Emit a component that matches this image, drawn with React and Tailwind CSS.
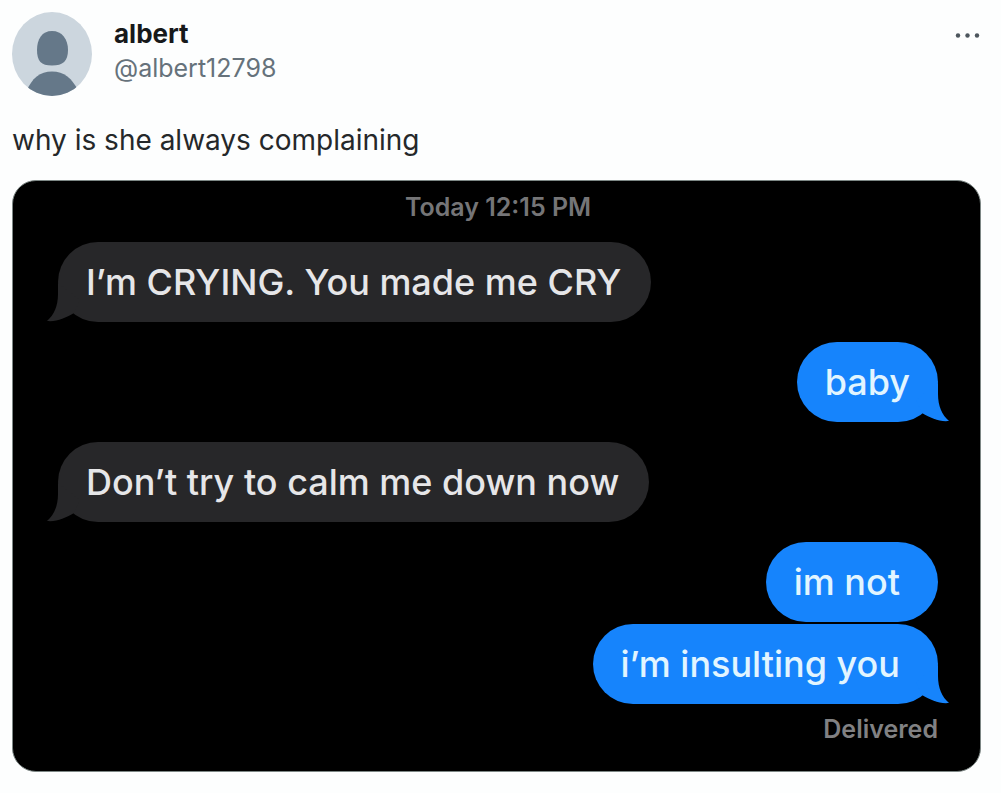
const messages = [
  { id: 1, from: "them", text: "I’m CRYING. You made me CRY", tail: true, spacing: "mt-5 pr-[30px]" },
  { id: 2, from: "me", text: "baby", tail: true, spacing: "mt-5 pr-7" },
  { id: 3, from: "them", text: "Don’t try to calm me down now", tail: true, spacing: "mt-5 pr-[30px]" },
  { id: 4, from: "me", text: "im not", tail: false, spacing: "mt-5 pr-[38px]" },
  { id: 5, from: "me", text: "i’m insulting you", tail: true, spacing: "mt-0.5 pr-[38px]" },
];

function Avatar() {
  return (
    <svg viewBox="0 0 80 84" className="h-[84px] w-20 shrink-0" role="img" aria-label="albert">
      <defs>
        <clipPath id="avatar-clip">
          <ellipse cx="40" cy="42" rx="40" ry="42" />
        </clipPath>
      </defs>
      <g clipPath="url(#avatar-clip)">
        <rect width="80" height="84" fill="#ccd6de" />
        <path d="M40 19C50 19 56 27 56 38C56 49 51 53.500 40 53.500S25 49 25 38C25 27 30 19 40 19Z" fill="#657889" />
        <path d="M14 80C20 66 28 59.500 40 59.500S60 66 67 80L60 84H20Z" fill="#657889" />
      </g>
    </svg>
  );
}

function Tail({ mine }) {
  return (
    <svg
      viewBox="0 0 40 42"
      aria-hidden="true"
      className={
        mine
          ? "absolute -right-3 bottom-0 h-[42px] w-10 -scale-x-100 fill-[#1684fc]"
          : "absolute bottom-0 -left-3 h-[42px] w-10 fill-[#272729]"
      }
    >
      <path d="M12 3V14C12 26 8 35 1 41C11 42 19 38 28 33L34 20Z" />
    </svg>
  );
}

function Message({ message }) {
  const mine = message.from === "me";
  return (
    <li className={`flex ${mine ? "justify-end" : "justify-start"}`}>
      <div
        className={`relative rounded-[40px] py-4 pl-7 text-4xl leading-12 font-medium ${message.spacing} ${
          mine ? "bg-[#1684fc] text-[#e2f5ff]" : "bg-[#272729] text-[#e6e6e8]"
        }`}
      >
        {message.tail && <Tail mine={mine} />}
        <p className="relative">{message.text}</p>
      </div>
    </li>
  );
}

export default function App() {
  return (
    <main className="min-h-screen bg-[#fdfefe] pt-3 pr-5 pb-5 pl-3 font-['Inter','Liberation_Sans',sans-serif]">
      <article>
        <header className="flex items-start">
          <Avatar />
          <div className="ml-[22px] flex-1 pt-1">
            <h1 className="text-[26px] leading-9 font-bold text-[#17191b]">albert</h1>
            <a href="#albert12798" className="block text-[25px] leading-8 text-[#66727b]">
              @albert12798
            </a>
          </div>
          <button type="button" aria-label="More" className="mt-3 py-1">
            <svg viewBox="0 0 26 16" className="h-4 w-[26px] fill-[#4d565d]">
              <circle cx="3" cy="7.500" r="2.200" />
              <circle cx="12.500" cy="7.500" r="2.200" />
              <circle cx="22" cy="7.500" r="2.200" />
            </svg>
          </button>
        </header>
        <p className="mt-6 text-[28px] leading-10 text-[#25282a]">why is she always complaining</p>
        <section
          aria-label="Conversation"
          className="mt-5 rounded-[24px] border border-[#7d8785] bg-black pt-3 pr-[42px] pb-7 pl-[45px]"
        >
          <p className="text-center text-[25px] leading-7 font-semibold text-[#757577]">
            <time>Today 12:15 PM</time>
          </p>
          <ul className="pt-px">
            {messages.map((message) => (
              <Message key={message.id} message={message} />
            ))}
          </ul>
          <p className="mt-[11px] text-right text-[25px] leading-7 font-semibold text-[#818183]">
            Delivered
          </p>
        </section>
      </article>
    </main>
  );
}
